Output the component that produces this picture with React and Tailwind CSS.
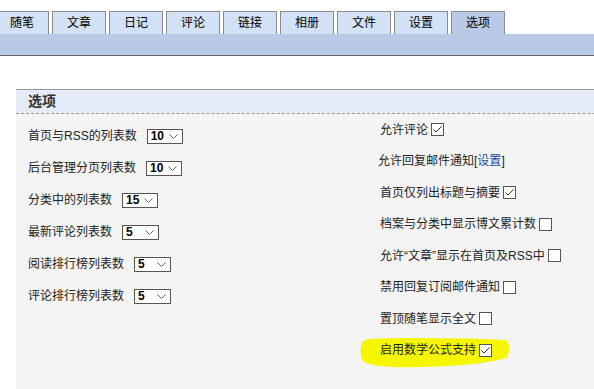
import { useState } from 'react';

const tabs = ['随笔', '文章', '日记', '评论', '链接', '相册', '文件', '设置', '选项'];

const leftRows = [
  { label: '首页与RSS的列表数', value: '10', w: 'w-[36px]' },
  { label: '后台管理分页列表数', value: '10', w: 'w-[36px]' },
  { label: '分类中的列表数', value: '15', w: 'w-[36px]' },
  { label: '最新评论列表数', value: '5', w: 'w-[37px]' },
  { label: '阅读排行榜列表数', value: '5', w: 'w-[37px]' },
  { label: '评论排行榜列表数', value: '5', w: 'w-[37px]' },
];

const rightRows = [
  { label: '允许评论', checked: true },
  { label: '允许回复邮件通知', link: true },
  { label: '首页仅列出标题与摘要', checked: true },
  { label: '档案与分类中显示博文累计数', checked: false },
  { label: '允许“文章”显示在首页及RSS中', checked: false },
  { label: '禁用回复订阅邮件通知', checked: false },
  { label: '置顶随笔显示全文', checked: false },
  { label: '启用数学公式支持', checked: true, mark: true },
];

function Select({ value, w }) {
  return (
    <div className={`${w} h-[15px] border border-[#555] bg-white flex items-center justify-between pl-[3px] pr-[4px]`}>
      <span className="text-[12px] font-bold text-black leading-none">{value}</span>
      <svg width="9" height="5" viewBox="0 0 9 5">
        <polyline points="0.5,0.5 4.5,4.5 8.5,0.5" fill="none" stroke="#666" strokeWidth="1" />
      </svg>
    </div>
  );
}

function Checkbox({ checked }) {
  const [on, setOn] = useState(checked);
  return (
    <button
      onClick={() => setOn(!on)}
      className="ml-[3px] w-[13px] h-[13px] border border-[#555] bg-white flex items-center justify-center"
    >
      {on && (
        <svg width="9" height="7" viewBox="0 0 9 7">
          <polyline points="0.5,3.5 3,6 8.5,0.5" fill="none" stroke="#333" strokeWidth="1" />
        </svg>
      )}
    </button>
  );
}

export default function App() {
  return (
    <div
      className="w-[594px] h-[389px] overflow-hidden bg-white text-[#222] text-[12px]"
      style={{ fontFamily: '"Liberation Sans", "Noto Sans CJK SC", sans-serif' }}
    >
      {/* Tabs */}
      <div className="pt-[11px]">
        <div className="flex gap-[3px] -ml-[5px]">
          {tabs.map((t, i) => {
            const active = i === tabs.length - 1;
            return (
              <div
                key={t}
                className={`w-[54px] h-[23px] border border-b-0 border-[#8c8c8c] flex items-center justify-center text-[12px] text-black ${
                  active ? 'bg-[#b8cae6]' : 'bg-[#d2e1f6]'
                }`}
              >
                {t}
              </div>
            );
          })}
        </div>
        <div className="h-[22px] bg-[#b8cae6] border-b border-[#666]" />
      </div>

      {/* Options panel */}
      <div className="ml-[16px] mt-[33px] w-[720px] bg-[#f4f4f4] border-t border-[#999] h-[320px]">
        <div className="h-[24px] bg-[#e4ecf7] border-b border-dashed border-[#999] flex items-center pl-[12px]">
          <span className="text-[14px] font-bold text-[#333]">选项</span>
        </div>
        <div className="flex pl-[12px]">
          <div className="w-[352px] pt-[6px]">
            {leftRows.map((r) => (
              <div key={r.label} className="h-[32px] flex items-center gap-[10px]">
                <span>{r.label}</span>
                <Select value={r.value} w={r.w} />
              </div>
            ))}
          </div>
          <div className="relative">
            {rightRows.map((r) => (
              <div key={r.label} className="relative h-[31.5px] flex items-center">
                {r.mark && (
                  <svg className="absolute left-[-20px] top-[0px]" width="152" height="34" viewBox="0 0 152 34">
                    <path
                      d="M4,5 C20,2 100,3 146,5 C150,9 150,18 146,23 C130,27 110,31 60,32 C30,33 8,31 3,26 C-1,20 0,10 4,5 Z"
                      fill="#f6f600"
                    />
                  </svg>
                )}
                <span className={`relative ${r.link ? '-ml-[2px]' : ''}`}>
                  {r.label}
                  {r.link && (
                    <>
                      [<a className="text-[#1a49a8]" href="#">设置</a>]
                    </>
                  )}
                </span>
                {!r.link && (
                  <span className="relative">
                    <Checkbox checked={r.checked} />
                  </span>
                )}
              </div>
            ))}
          </div>
        </div>
      </div>
    </div>
  );
}
